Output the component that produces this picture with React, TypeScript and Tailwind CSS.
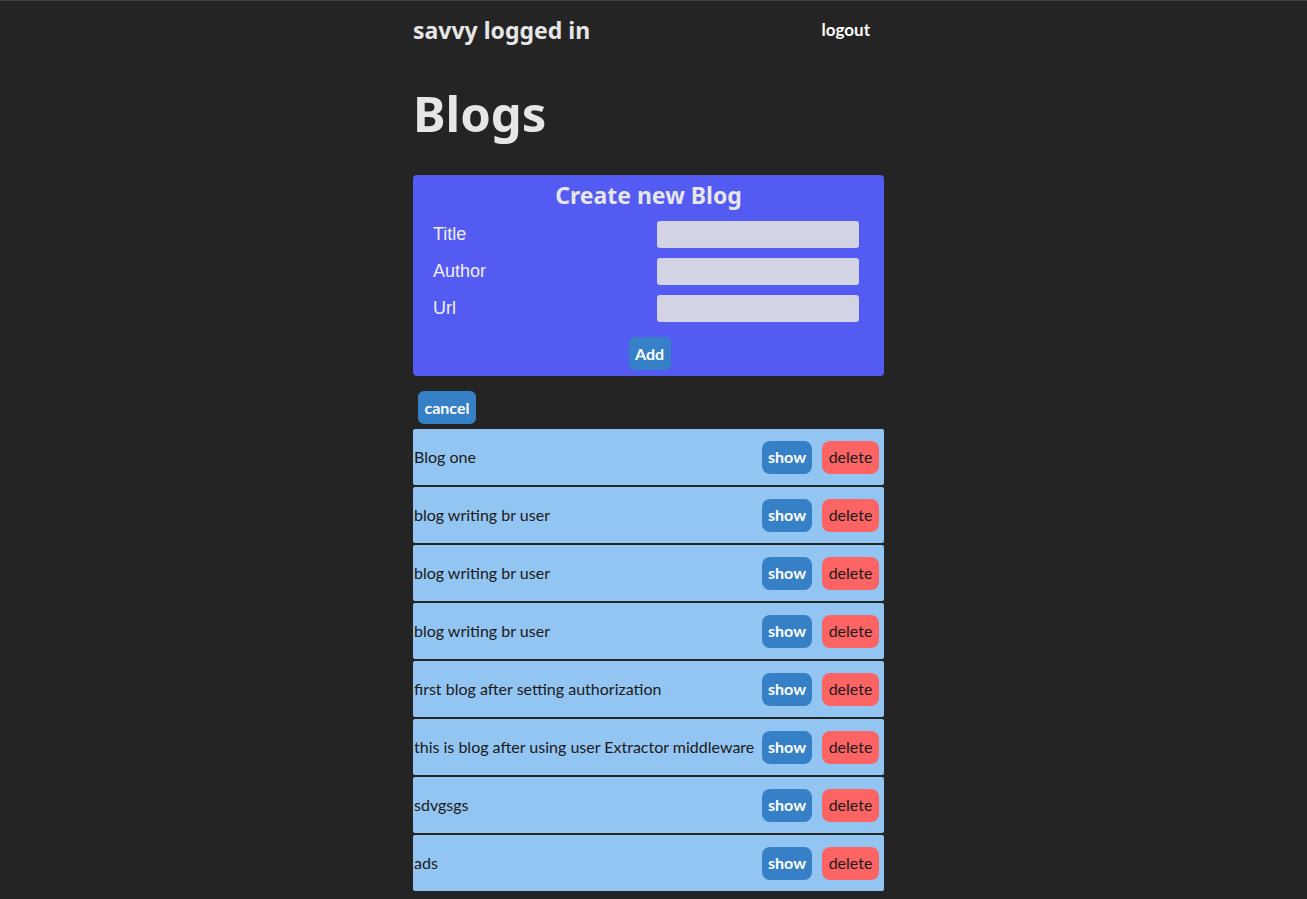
import React from 'react';

const blogs = [
  'Blog one',
  'blog writing br user',
  'blog writing br user',
  'blog writing br user',
  'first blog after setting authorization',
  'this is blog after using user Extractor middleware',
  'sdvgsgs',
  'ads',
];

const font = { fontFamily: 'Lato, "Noto Sans", sans-serif' };
const heading = { fontFamily: '"Noto Sans", Lato, sans-serif' };

export default function App() {
  return (
    <div className="min-h-[899px] bg-[#242424] border-t border-[#3b4242] text-[#e6e6e6]" style={font}>
      <div className="w-[481px] mx-auto">
        <div className="w-[471px]">
          {/* Header */}
          <div className="flex items-center justify-between h-[58px]">
            <h2 className="text-[23px] font-bold leading-none" style={heading}>savvy logged in</h2>
            <button className="text-[17px] font-bold text-white mr-[14px]">logout</button>
          </div>

          <h1 className="text-[49px] font-bold leading-none mt-[30px] mb-[37px]" style={heading}>Blogs</h1>

          {/* Form */}
          <div className="bg-[#535bf2] rounded-[4px] pb-[6px]">
            <h3 className="text-center text-[23px] font-bold leading-[38px] pt-[1px]" style={heading}>Create new Blog</h3>
            <div className="flex flex-col gap-[10px] px-[20px] mt-[7px]" style={{ fontFamily: '"Liberation Sans", Arial, sans-serif' }}>
              {['Title', 'Author', 'Url'].map((label) => (
                <div key={label} className="flex items-center justify-between h-[27px]">
                  <label className="text-[18px] text-[#eef]">{label}</label>
                  <input className="w-[202px] h-[27px] rounded-[3px] bg-[#d3d3e6] outline-none mr-[5px]" />
                </div>
              ))}
            </div>
            <div className="flex justify-center mt-[15px]">
              <button className="bg-[#3680c8] text-white font-bold text-[16px] rounded-[6px] w-[42px] h-[33px] ml-[2px]">Add</button>
            </div>
          </div>

          <button className="bg-[#3680c8] text-white font-bold text-[16px] rounded-[6px] w-[58px] h-[33px] mt-[15px] ml-[5px]">
            cancel
          </button>

          {/* Blog list */}
          <div className="flex flex-col gap-[2px] mt-[5px]">
            {blogs.map((title, i) => (
              <div key={i} className="bg-[#93c5f3] rounded-[2px] h-[56px] flex items-center text-[#1a1a1a] text-[16px]">
                <span className="pl-[1px] flex-1 whitespace-nowrap">{title}</span>
                <button className="shrink-0 bg-[#3680c8] text-white font-bold w-[50px] h-[33px] rounded-[8px] mx-[5px]">show</button>
                <button className="shrink-0 bg-[#ff6464] text-[#1a1a1a] w-[57px] h-[33px] rounded-[8px] mx-[5px]">delete</button>
              </div>
            ))}
          </div>
        </div>
      </div>
    </div>
  );
}
